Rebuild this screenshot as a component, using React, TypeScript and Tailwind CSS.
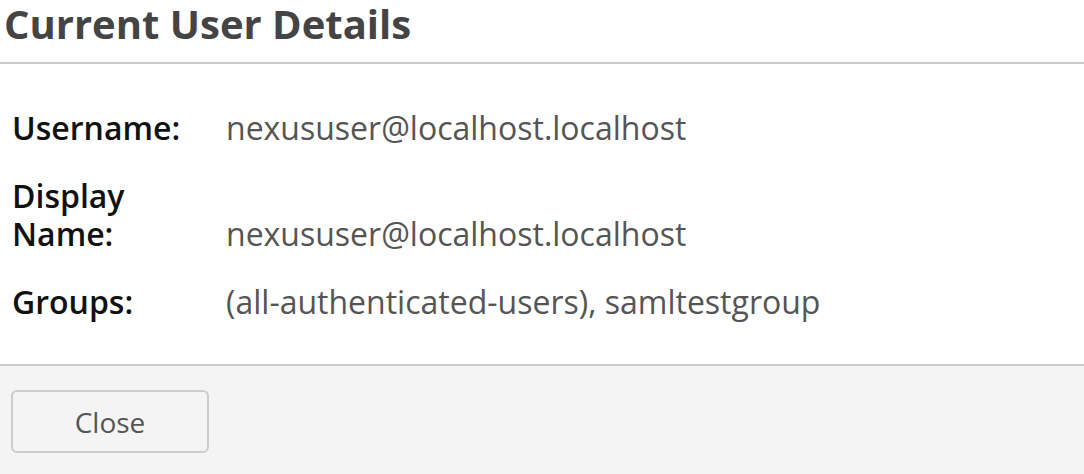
export default function App() {
  const rows = [
    { label: "Username:", value: "nexususer@localhost.localhost" },
    { label: "Display Name:", value: "nexususer@localhost.localhost" },
    { label: "Groups:", value: "(all-authenticated-users), samltestgroup" },
  ];

  return (
    <div className="flex h-[474px] w-[1084px] flex-col bg-white font-['Open_Sans',sans-serif]">
      <div className="h-[64px] shrink-0 border-b-2 border-[#cccccc] px-[4px]">
        <h1 className="text-[40px] font-bold leading-[48px] text-[#444444]">Current User Details</h1>
      </div>
      <div className="flex-1 px-[12px] pt-[45px]">
        <table className="border-collapse">
          <tbody>
            {rows.map((row) => (
              <tr key={row.label}>
                <td className="w-[214px] pb-[30px] pr-[40px] align-bottom text-[32px] font-semibold leading-[38px] text-[#111111]">
                  {row.label}
                </td>
                <td className="pb-[30px] align-bottom text-[32px] leading-[38px] text-[#555555]">{row.value}</td>
              </tr>
            ))}
          </tbody>
        </table>
      </div>
      <div className="h-[110px] shrink-0 border-t-2 border-[#cccccc] bg-[#f4f4f4] px-[11px] pt-[24px]">
        <button
          type="button"
          className="h-[63px] w-[198px] rounded-[6px] border-2 border-[#cccccc] bg-[#f4f4f4] text-[28px] text-[#555555]"
        >
          Close
        </button>
      </div>
    </div>
  );
}
